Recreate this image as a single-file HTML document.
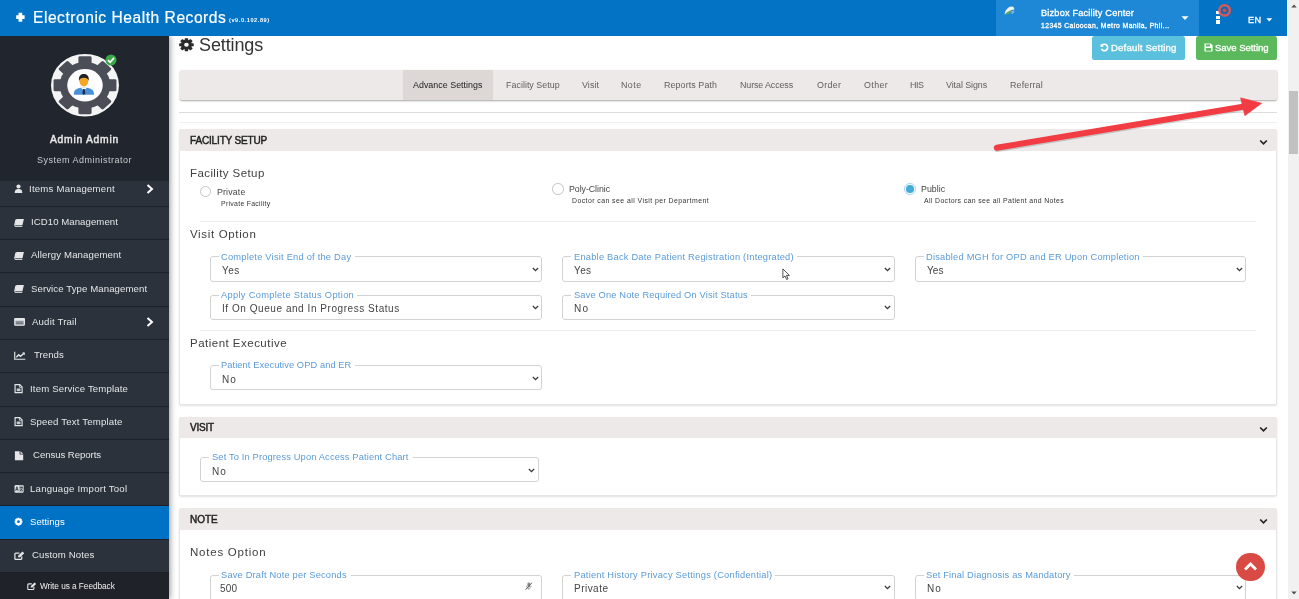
<!DOCTYPE html>
<html><head><meta charset="utf-8"><title>Electronic Health Records - Settings</title>
<style>
html,body{margin:0;padding:0;}
body{width:1299px;height:599px;position:relative;overflow:hidden;background:#fff;font-family:"Liberation Sans",sans-serif;}
.t{position:absolute;white-space:nowrap;display:block;will-change:transform;}
.abs,.ic,.mi,.fs,.gap,.hr,.card,.ch{position:absolute;}
.ic{overflow:visible;}
.mi{left:0;width:168.5px;height:32.3px;background:#2b323b;border-bottom:1px solid #1d2026;}
.mi.act{background:#0072c6;}
.fs{border:1px solid #d2d2d2;border-radius:3px;background:#fff;}
.gap{height:3px;background:#fff;}
.hr{height:1px;background:#ececec;}
.card{background:#fff;border:1px solid #e6e6e6;border-radius:2px;box-shadow:0 1px 2px rgba(0,0,0,.12);}
.ch{background:#ece9e8;border-radius:2px 2px 0 0;}
</style></head><body>

<!-- main content background -->
<div class="abs" style="left:168px;top:36px;width:1120px;height:563px;background:#fff"></div>

<!-- page title -->
<svg class="ic" style="left:179.1px;top:38.4px" width="14.9" height="13.5" viewBox="0 0 20 20" preserveAspectRatio="none"><g fill="#2b2b2b"><circle cx="10" cy="10" r="7.3"/><g transform="rotate(0 10 10)"><rect x="7.7" y="0.2" width="4.6" height="5" rx="0.8"/><rect x="7.7" y="14.8" width="4.6" height="5" rx="0.8"/></g><g transform="rotate(45 10 10)"><rect x="7.7" y="0.2" width="4.6" height="5" rx="0.8"/><rect x="7.7" y="14.8" width="4.6" height="5" rx="0.8"/></g><g transform="rotate(90 10 10)"><rect x="7.7" y="0.2" width="4.6" height="5" rx="0.8"/><rect x="7.7" y="14.8" width="4.6" height="5" rx="0.8"/></g><g transform="rotate(135 10 10)"><rect x="7.7" y="0.2" width="4.6" height="5" rx="0.8"/><rect x="7.7" y="14.8" width="4.6" height="5" rx="0.8"/></g></g><circle cx="10" cy="10" r="3.1" fill="#fff"/></svg>
<span class="t" style="left:199.30px;top:33.00px;font-size:18.00px;line-height:24.00px;color:#333;font-weight:400;letter-spacing:-0.120px;">Settings</span>

<!-- buttons -->
<div class="abs" style="left:1092px;top:36px;width:93px;height:23.6px;background:#5bc0de;border-radius:2.5px"></div>
<svg class="ic" style="left:1099.5px;top:43px" width="9" height="9" viewBox="0 0 10 10"><path d="M2.2 2.6 A3.6 3.6 0 1 1 1.6 6.4" fill="none" stroke="#fff" stroke-width="1.9"/><path d="M0.6 0.8 V4.4 H4.2 Z" fill="#fff"/></svg>
<span class="t" style="left:1111.20px;top:40.00px;font-size:9.60px;line-height:15.00px;color:#fff;font-weight:400;letter-spacing:0.179px;-webkit-text-stroke:0.3px currentColor;">Default Setting</span>
<div class="abs" style="left:1195.6px;top:36px;width:81.4px;height:23.6px;background:#5cb85c;border-radius:2.5px"></div>
<svg class="ic" style="left:1203.5px;top:43.2px" width="9" height="9" viewBox="0 0 10 10"><path d="M0.5 0.5 H7.6 L9.5 2.4 V9.5 H0.5 Z" fill="#fff"/><rect x="2" y="1.5" width="4.6" height="2.3" fill="#5cb85c"/><rect x="2" y="5.6" width="6" height="3" fill="#5cb85c"/></svg>
<span class="t" style="left:1214.80px;top:40.00px;font-size:9.60px;line-height:15.00px;color:#fff;font-weight:400;letter-spacing:-0.070px;-webkit-text-stroke:0.3px currentColor;">Save Setting</span>

<!-- tab bar -->
<div class="abs" style="left:179.5px;top:69.6px;width:1097.5px;height:30.2px;background:#ece9e8;border-radius:2px;box-shadow:0 1px 2px rgba(0,0,0,.35)"></div>
<div class="abs" style="left:403px;top:69.6px;width:90px;height:30.2px;background:#ddd7d6"></div>
<span class="t" style="left:413.30px;top:78.00px;font-size:8.90px;line-height:14.00px;color:#222;font-weight:400;letter-spacing:0.024px;">Advance Settings</span><span class="t" style="left:505.80px;top:78.00px;font-size:8.90px;line-height:14.00px;color:#606060;font-weight:400;letter-spacing:0.028px;">Facility Setup</span><span class="t" style="left:582.00px;top:78.00px;font-size:8.90px;line-height:14.00px;color:#606060;font-weight:400;letter-spacing:0.090px;">Visit</span><span class="t" style="left:621.30px;top:78.00px;font-size:8.90px;line-height:14.00px;color:#606060;font-weight:400;letter-spacing:0.463px;">Note</span><span class="t" style="left:664.30px;top:78.00px;font-size:8.90px;line-height:14.00px;color:#606060;font-weight:400;letter-spacing:0.103px;">Reports Path</span><span class="t" style="left:740.00px;top:78.00px;font-size:8.90px;line-height:14.00px;color:#606060;font-weight:400;letter-spacing:-0.101px;">Nurse Access</span><span class="t" style="left:816.70px;top:78.00px;font-size:8.90px;line-height:14.00px;color:#606060;font-weight:400;letter-spacing:0.342px;">Order</span><span class="t" style="left:863.50px;top:78.00px;font-size:8.90px;line-height:14.00px;color:#606060;font-weight:400;letter-spacing:0.390px;">Other</span><span class="t" style="left:910.00px;top:78.00px;font-size:8.90px;line-height:14.00px;color:#606060;font-weight:400;letter-spacing:-0.438px;">HIS</span><span class="t" style="left:946.30px;top:78.00px;font-size:8.90px;line-height:14.00px;color:#606060;font-weight:400;letter-spacing:-0.063px;">Vital Signs</span><span class="t" style="left:1010.30px;top:78.00px;font-size:8.90px;line-height:14.00px;color:#606060;font-weight:400;letter-spacing:0.158px;">Referral</span>
<div class="hr" style="left:179px;top:111.5px;width:1098px;background:#dcdcdc"></div>
<div class="hr" style="left:179px;top:122px;width:1098px;background:#f0f0f0"></div>

<!-- FACILITY SETUP card -->
<div class="card" style="left:179px;top:129px;width:1096px;height:273.5px"></div>
<div class="ch" style="left:179px;top:129px;width:1098px;height:22.3px"></div>
<span class="t" style="left:190.20px;top:133.00px;font-size:10.00px;line-height:15.00px;color:#222;font-weight:400;letter-spacing:-0.153px;-webkit-text-stroke:0.45px currentColor;">FACILITY SETUP</span>
<svg class="ic" style="left:1259px;top:139px" width="9" height="7" viewBox="0 0 9 7"><path d="M1.2 1.5 L4.5 4.8 L7.8 1.5" fill="none" stroke="#222" stroke-width="1.7"/></svg>
<span class="t" style="left:190.30px;top:165.00px;font-size:11.50px;line-height:16.00px;color:#3f3f3f;font-weight:400;letter-spacing:0.405px;">Facility Setup</span>
<div class="abs" style="left:199.7px;top:185.6px;width:9.6px;height:9.6px;border:1px solid #c4c4c4;border-radius:50%;background:#fff"></div>
<span class="t" style="left:217.10px;top:185.00px;font-size:8.80px;line-height:14.00px;color:#444;font-weight:400;letter-spacing:0.152px;">Private</span><span class="t" style="left:220.60px;top:198.00px;font-size:6.90px;line-height:11.00px;color:#333;font-weight:400;letter-spacing:0.296px;">Private Facility</span>
<div class="abs" style="left:552.1px;top:183.1px;width:9.6px;height:9.6px;border:1px solid #c4c4c4;border-radius:50%;background:#fff"></div>
<span class="t" style="left:569.30px;top:182.00px;font-size:8.80px;line-height:14.00px;color:#444;font-weight:400;letter-spacing:-0.045px;">Poly-Clinic</span><span class="t" style="left:572.30px;top:195.00px;font-size:6.90px;line-height:11.00px;color:#333;font-weight:400;letter-spacing:0.444px;">Doctor can see all Visit per Department</span>
<div class="abs" style="left:904.1px;top:182.9px;width:9.8px;height:9.8px;border:1px solid #a6d6ee;border-radius:50%;background:#fff"></div>
<div class="abs" style="left:906.2px;top:185px;width:7.6px;height:7.6px;border-radius:50%;background:#45acda"></div>
<span class="t" style="left:921.30px;top:182.00px;font-size:8.80px;line-height:14.00px;color:#444;font-weight:400;letter-spacing:0.028px;">Public</span><span class="t" style="left:924.30px;top:195.00px;font-size:6.90px;line-height:11.00px;color:#333;font-weight:400;letter-spacing:0.370px;">All Doctors can see all Patient and Notes</span>
<div class="hr" style="left:200px;top:221px;width:1056px"></div>
<span class="t" style="left:190.30px;top:226.00px;font-size:11.50px;line-height:16.00px;color:#3f3f3f;font-weight:400;letter-spacing:0.655px;">Visit Option</span><div class="fs" style="left:209.90px;top:256.35px;width:330.30px;height:23.65px"></div><div class="gap" style="left:218.90px;top:255.35px;width:136.40px"></div><span class="t" style="left:221.40px;top:250.00px;font-size:9.30px;line-height:14.00px;color:#5b9bd8;font-weight:400;letter-spacing:0.221px;">Complete Visit End of the Day</span><span class="t" style="left:222.00px;top:263.00px;font-size:10.00px;line-height:15.00px;color:#444;font-weight:400;letter-spacing:0.443px;">Yes</span><svg class="ic" style="left:531.80px;top:266.85px" width="7" height="5.25" viewBox="0 0 8 6"><path d="M1 1.2 L4 4.2 L7 1.2" fill="none" stroke="#3a3a3a" stroke-width="1.5"/></svg><div class="fs" style="left:562.00px;top:256.35px;width:330.60px;height:23.65px"></div><div class="gap" style="left:571.00px;top:255.35px;width:225.50px"></div><span class="t" style="left:573.50px;top:250.00px;font-size:9.30px;line-height:14.00px;color:#5b9bd8;font-weight:400;letter-spacing:0.221px;">Enable Back Date Patient Registration (Integrated)</span><span class="t" style="left:574.10px;top:263.00px;font-size:10.00px;line-height:15.00px;color:#444;font-weight:400;letter-spacing:0.393px;">Yes</span><svg class="ic" style="left:884.20px;top:266.85px" width="7" height="5.25" viewBox="0 0 8 6"><path d="M1 1.2 L4 4.2 L7 1.2" fill="none" stroke="#3a3a3a" stroke-width="1.5"/></svg><div class="fs" style="left:914.70px;top:256.35px;width:329.60px;height:23.65px"></div><div class="gap" style="left:923.70px;top:255.35px;width:219.30px"></div><span class="t" style="left:926.20px;top:250.00px;font-size:9.30px;line-height:14.00px;color:#5b9bd8;font-weight:400;letter-spacing:0.211px;">Disabled MGH for OPD and ER Upon Completion</span><span class="t" style="left:926.80px;top:263.00px;font-size:10.00px;line-height:15.00px;color:#444;font-weight:400;letter-spacing:0.043px;">Yes</span><svg class="ic" style="left:1235.90px;top:266.85px" width="7" height="5.25" viewBox="0 0 8 6"><path d="M1 1.2 L4 4.2 L7 1.2" fill="none" stroke="#3a3a3a" stroke-width="1.5"/></svg><div class="fs" style="left:209.90px;top:294.80px;width:330.30px;height:23.10px"></div><div class="gap" style="left:218.90px;top:293.80px;width:138.60px"></div><span class="t" style="left:221.40px;top:288.00px;font-size:9.30px;line-height:14.00px;color:#5b9bd8;font-weight:400;letter-spacing:0.305px;">Apply Complete Status Option</span><span class="t" style="left:222.00px;top:301.00px;font-size:10.00px;line-height:15.00px;color:#444;font-weight:400;letter-spacing:0.552px;">If On Queue and In Progress Status</span><svg class="ic" style="left:531.80px;top:305.30px" width="7" height="5.25" viewBox="0 0 8 6"><path d="M1 1.2 L4 4.2 L7 1.2" fill="none" stroke="#3a3a3a" stroke-width="1.5"/></svg><div class="fs" style="left:562.00px;top:294.80px;width:330.60px;height:23.10px"></div><div class="gap" style="left:571.00px;top:293.80px;width:180.00px"></div><span class="t" style="left:573.50px;top:288.00px;font-size:9.30px;line-height:14.00px;color:#5b9bd8;font-weight:400;letter-spacing:0.159px;">Save One Note Required On Visit Status</span><span class="t" style="left:574.10px;top:301.00px;font-size:10.00px;line-height:15.00px;color:#444;font-weight:400;letter-spacing:1.278px;">No</span><svg class="ic" style="left:884.20px;top:305.30px" width="7" height="5.25" viewBox="0 0 8 6"><path d="M1 1.2 L4 4.2 L7 1.2" fill="none" stroke="#3a3a3a" stroke-width="1.5"/></svg>
<div class="hr" style="left:200px;top:330px;width:1056px"></div>
<span class="t" style="left:190.30px;top:335.00px;font-size:11.50px;line-height:16.00px;color:#3f3f3f;font-weight:400;letter-spacing:0.484px;">Patient Executive</span><div class="fs" style="left:209.90px;top:365.30px;width:330.30px;height:23.10px"></div><div class="gap" style="left:218.90px;top:364.30px;width:136.60px"></div><span class="t" style="left:221.40px;top:358.00px;font-size:9.30px;line-height:14.00px;color:#5b9bd8;font-weight:400;letter-spacing:0.080px;">Patient Executive OPD and ER</span><span class="t" style="left:222.00px;top:372.00px;font-size:10.00px;line-height:15.00px;color:#444;font-weight:400;letter-spacing:1.078px;">No</span><svg class="ic" style="left:531.80px;top:375.80px" width="7" height="5.25" viewBox="0 0 8 6"><path d="M1 1.2 L4 4.2 L7 1.2" fill="none" stroke="#3a3a3a" stroke-width="1.5"/></svg>

<!-- VISIT card -->
<div class="card" style="left:179px;top:416.5px;width:1096px;height:77px"></div>
<div class="ch" style="left:179px;top:416.5px;width:1098px;height:21px"></div>
<span class="t" style="left:190.20px;top:420.00px;font-size:10.00px;line-height:15.00px;color:#222;font-weight:400;letter-spacing:-0.199px;-webkit-text-stroke:0.45px currentColor;">VISIT</span>
<svg class="ic" style="left:1259px;top:425.5px" width="9" height="7" viewBox="0 0 9 7"><path d="M1.2 1.5 L4.5 4.8 L7.8 1.5" fill="none" stroke="#222" stroke-width="1.7"/></svg>
<div class="fs" style="left:200.00px;top:457.10px;width:336.80px;height:22.90px"></div><div class="gap" style="left:209.00px;top:456.10px;width:203.50px"></div><span class="t" style="left:211.50px;top:450.00px;font-size:9.30px;line-height:14.00px;color:#5b9bd8;font-weight:400;letter-spacing:0.149px;">Set To In Progress Upon Access Patient Chart</span><span class="t" style="left:212.10px;top:464.00px;font-size:10.00px;line-height:15.00px;color:#444;font-weight:400;letter-spacing:1.078px;">No</span><svg class="ic" style="left:528.40px;top:467.60px" width="7" height="5.25" viewBox="0 0 8 6"><path d="M1 1.2 L4 4.2 L7 1.2" fill="none" stroke="#3a3a3a" stroke-width="1.5"/></svg>

<!-- NOTE card -->
<div class="card" style="left:179px;top:508.5px;width:1096px;height:120px"></div>
<div class="ch" style="left:179px;top:508.2px;width:1098px;height:22px"></div>
<span class="t" style="left:190.20px;top:512.00px;font-size:10.00px;line-height:15.00px;color:#222;font-weight:400;letter-spacing:-0.003px;-webkit-text-stroke:0.45px currentColor;">NOTE</span>
<svg class="ic" style="left:1259px;top:517.5px" width="9" height="7" viewBox="0 0 9 7"><path d="M1.2 1.5 L4.5 4.8 L7.8 1.5" fill="none" stroke="#222" stroke-width="1.7"/></svg>
<span class="t" style="left:190.30px;top:544.00px;font-size:11.50px;line-height:16.00px;color:#3f3f3f;font-weight:400;letter-spacing:0.771px;">Notes Option</span><div class="fs" style="left:209.90px;top:574.80px;width:330.30px;height:24.70px"></div><div class="gap" style="left:218.90px;top:573.80px;width:131.90px"></div><span class="t" style="left:221.40px;top:568.00px;font-size:9.30px;line-height:14.00px;color:#5b9bd8;font-weight:400;letter-spacing:0.178px;">Save Draft Note per Seconds</span><span class="t" style="left:220.10px;top:581.00px;font-size:10.00px;line-height:15.00px;color:#444;font-weight:400;letter-spacing:0.238px;">500</span><div class="fs" style="left:562.00px;top:574.80px;width:330.60px;height:24.70px"></div><div class="gap" style="left:571.00px;top:573.80px;width:204.00px"></div><span class="t" style="left:573.50px;top:568.00px;font-size:9.30px;line-height:14.00px;color:#5b9bd8;font-weight:400;letter-spacing:0.229px;">Patient History Privacy Settings (Confidential)</span><span class="t" style="left:574.10px;top:581.00px;font-size:10.00px;line-height:15.00px;color:#444;font-weight:400;letter-spacing:0.473px;">Private</span><svg class="ic" style="left:884.20px;top:585.30px" width="7" height="5.25" viewBox="0 0 8 6"><path d="M1 1.2 L4 4.2 L7 1.2" fill="none" stroke="#3a3a3a" stroke-width="1.5"/></svg><div class="fs" style="left:914.70px;top:574.80px;width:329.60px;height:24.70px"></div><div class="gap" style="left:923.70px;top:573.80px;width:150.80px"></div><span class="t" style="left:926.20px;top:568.00px;font-size:9.30px;line-height:14.00px;color:#5b9bd8;font-weight:400;letter-spacing:0.176px;">Set Final Diagnosis as Mandatory</span><span class="t" style="left:926.80px;top:581.00px;font-size:10.00px;line-height:15.00px;color:#444;font-weight:400;letter-spacing:0.978px;">No</span><svg class="ic" style="left:1235.90px;top:585.30px" width="7" height="5.25" viewBox="0 0 8 6"><path d="M1 1.2 L4 4.2 L7 1.2" fill="none" stroke="#3a3a3a" stroke-width="1.5"/></svg>

<svg class="ic" style="left:524.8px;top:582.2px" width="7.4" height="8.4" viewBox="0 0 7.4 8.4"><rect x="2.4" y="0.6" width="2.8" height="4.6" rx="1.4" fill="#8a8a8a"/><path d="M1.4 3.8 C1.4 7 6.2 7 6.2 3.8 M3.8 6.2 V7.8" fill="none" stroke="#8a8a8a" stroke-width="0.8"/><path d="M0.6 7.8 L6.8 0.8" stroke="#555" stroke-width="1"/></svg>
<!-- red arrow annotation -->
<svg class="ic" style="left:0;top:0" width="1299" height="599" viewBox="0 0 1299 599">
<g opacity="0.25" transform="translate(0.8,1.2)"><path d="M996.8 147.7 L1243 106.7" stroke="#555" stroke-width="6.4" stroke-linecap="round"/></g>
<path d="M996.8 147.7 L1243 106.7" stroke="#f03c42" stroke-width="6" stroke-linecap="round" fill="none"/>
<path d="M1240.7 97.9 L1261.6 103.3 L1244.9 115.6 Z" fill="#f03c42" stroke="#f03c42" stroke-width="0.8" stroke-linejoin="round"/>
</svg>

<!-- scroll-to-top button -->
<div class="abs" style="left:1236px;top:552.5px;width:28.5px;height:28.5px;border-radius:50%;background:#d94a45"></div>
<svg class="ic" style="left:1243px;top:561px" width="15" height="11" viewBox="0 0 15 11"><path d="M2 8.5 L7.5 3 L13 8.5" fill="none" stroke="#fff" stroke-width="2.8"/></svg>

<!-- mouse cursor -->
<svg class="ic" style="left:782.2px;top:267.6px" width="8.6" height="12.9" viewBox="0 0 10 15"><path d="M1 1 V11.5 L3.5 9.2 L5.3 13.3 L7 12.6 L5.2 8.6 H8.6 Z" fill="#fff" stroke="#222" stroke-width="0.9"/></svg>

<!-- sidebar -->
<div class="abs" style="left:0;top:36px;width:168.5px;height:563px;background:#21252d;box-shadow:1px 0 6px rgba(0,0,0,.42)"></div>
<div class="mi" style="top:173.45px"></div><svg class="ic" style="left:14px;top:184.25px" width="9" height="9" viewBox="0 0 10 10"><circle cx="5" cy="2.8" r="2.3" fill="#e4e6e8"/><path d="M0.8 10 C0.8 6.5 2.5 5.6 5 5.6 S9.2 6.5 9.2 10Z" fill="#e4e6e8"/></svg><span class="t" style="left:29.30px;top:181.00px;font-size:9.60px;line-height:15.00px;color:#e4e6e8;font-weight:400;letter-spacing:0.236px;">Items Management</span><svg class="ic" style="left:146px;top:183.75px" width="8" height="10" viewBox="0 0 8 10"><path d="M1.5 1 L6 5 L1.5 9" fill="none" stroke="#fff" stroke-width="2"/></svg><div class="mi" style="top:206.75px"></div><svg class="ic" style="left:14px;top:217.55px" width="9" height="9" viewBox="0 0 10 10"><path d="M2.6 1.2 H11 L9.4 8 H1 Z" fill="#e4e6e8"/><path d="M0.7 8.4 L2.2 1.8" stroke="#e4e6e8" stroke-width="1.3"/><path d="M0.8 9.3 H9.2" stroke="#e4e6e8" stroke-width="1.1"/></svg><span class="t" style="left:31.00px;top:214.00px;font-size:9.60px;line-height:15.00px;color:#e4e6e8;font-weight:400;letter-spacing:0.067px;">ICD10 Management</span><div class="mi" style="top:240.05px"></div><svg class="ic" style="left:14px;top:250.85px" width="9" height="9" viewBox="0 0 10 10"><path d="M2.6 1.2 H11 L9.4 8 H1 Z" fill="#e4e6e8"/><path d="M0.7 8.4 L2.2 1.8" stroke="#e4e6e8" stroke-width="1.3"/><path d="M0.8 9.3 H9.2" stroke="#e4e6e8" stroke-width="1.1"/></svg><span class="t" style="left:31.00px;top:247.00px;font-size:9.60px;line-height:15.00px;color:#e4e6e8;font-weight:400;letter-spacing:0.128px;">Allergy Management</span><div class="mi" style="top:273.35px"></div><svg class="ic" style="left:14px;top:284.15px" width="9" height="9" viewBox="0 0 10 10"><path d="M2.6 1.2 H11 L9.4 8 H1 Z" fill="#e4e6e8"/><path d="M0.7 8.4 L2.2 1.8" stroke="#e4e6e8" stroke-width="1.3"/><path d="M0.8 9.3 H9.2" stroke="#e4e6e8" stroke-width="1.1"/></svg><span class="t" style="left:30.60px;top:281.00px;font-size:9.60px;line-height:15.00px;color:#e4e6e8;font-weight:400;letter-spacing:0.098px;">Service Type Management</span><div class="mi" style="top:306.65px"></div><svg class="ic" style="left:14px;top:317.45px" width="9" height="9" viewBox="0 0 10 10"><rect x="0.8" y="1.6" width="10.8" height="7.6" rx="0.8" fill="#aeb3ba" stroke="#e4e6e8" stroke-width="1.2"/><rect x="0.8" y="1.6" width="10.8" height="2.4" fill="#e4e6e8"/><path d="M2.2 5.6 H10.2 M2.2 7.4 H10.2" stroke="#4a5059" stroke-width="0.8"/></svg><span class="t" style="left:32.00px;top:314.00px;font-size:9.60px;line-height:15.00px;color:#e4e6e8;font-weight:400;letter-spacing:0.190px;">Audit Trail</span><svg class="ic" style="left:146px;top:316.95px" width="8" height="10" viewBox="0 0 8 10"><path d="M1.5 1 L6 5 L1.5 9" fill="none" stroke="#fff" stroke-width="2"/></svg><div class="mi" style="top:339.95px"></div><svg class="ic" style="left:14px;top:350.75px" width="9" height="9" viewBox="0 0 10 10"><path d="M0.8 0.8 V9.2 H12.6" fill="none" stroke="#e4e6e8" stroke-width="1.3"/><path d="M2.6 7 L5.2 4.2 L7.2 6 L11.4 2.2" fill="none" stroke="#e4e6e8" stroke-width="1.6"/><path d="M9 1.6 H12 V4.6 Z" fill="#e4e6e8"/></svg><span class="t" style="left:33.50px;top:347.00px;font-size:9.60px;line-height:15.00px;color:#e4e6e8;font-weight:400;letter-spacing:0.059px;">Trends</span><div class="mi" style="top:373.25px"></div><svg class="ic" style="left:14px;top:384.05px" width="9" height="9" viewBox="0 0 10 10"><path d="M1.2 0.6 H6.4 L9 3.2 V9.6 H1.2 Z" fill="none" stroke="#e4e6e8" stroke-width="1.3"/><path d="M6 0.8 V3.6 H8.8" fill="none" stroke="#e4e6e8" stroke-width="0.9"/><rect x="3" y="5" width="4.2" height="3" fill="#c9ccd0"/></svg><span class="t" style="left:30.40px;top:381.00px;font-size:9.60px;line-height:15.00px;color:#e4e6e8;font-weight:400;letter-spacing:0.161px;">Item Service Template</span><div class="mi" style="top:406.55px"></div><svg class="ic" style="left:14px;top:417.35px" width="9" height="9" viewBox="0 0 10 10"><path d="M1.2 0.6 H6.4 L9 3.2 V9.6 H1.2 Z" fill="none" stroke="#e4e6e8" stroke-width="1.3"/><path d="M6 0.8 V3.6 H8.8" fill="none" stroke="#e4e6e8" stroke-width="0.9"/><rect x="3" y="5" width="4.2" height="3" fill="#c9ccd0"/></svg><span class="t" style="left:30.40px;top:414.00px;font-size:9.60px;line-height:15.00px;color:#e4e6e8;font-weight:400;letter-spacing:0.175px;">Speed Text Template</span><div class="mi" style="top:439.85px"></div><svg class="ic" style="left:14px;top:450.65px" width="9" height="9" viewBox="0 0 10 10"><path d="M1 0.2 H6.2 V4 H10.2 V10.2 H1 Z M7.2 0.2 L10.2 3 H7.2Z" fill="#e4e6e8"/></svg><span class="t" style="left:33.00px;top:447.00px;font-size:9.60px;line-height:15.00px;color:#e4e6e8;font-weight:400;letter-spacing:-0.053px;">Census Reports</span><div class="mi" style="top:473.15px"></div><svg class="ic" style="left:14px;top:483.95px" width="9" height="9" viewBox="0 0 10 10"><rect x="0.6" y="1" width="10" height="8.6" rx="1.4" fill="#dfe1e4"/><rect x="5.4" y="1" width="5.2" height="8.6" rx="1.2" fill="#b9bdc3"/><path d="M1.8 7.6 L3.2 3 L4.6 7.6 M2.3 6.2 H4.1" stroke="#2b323b" stroke-width="0.9" fill="none"/><path d="M6.2 3.8 H9.8 M8 2.8 V3.8 M6.8 7.6 C8.4 6.8 9 5.4 9.2 3.8 M7 5 C7.6 6.4 8.6 7.2 9.8 7.6" stroke="#2b323b" stroke-width="0.8" fill="none"/></svg><span class="t" style="left:30.40px;top:481.00px;font-size:9.60px;line-height:15.00px;color:#e4e6e8;font-weight:400;letter-spacing:0.233px;">Language Import Tool</span><div class="mi act" style="top:506.45px"></div><svg class="ic" style="left:14px;top:517.25px" width="9" height="9" viewBox="0 0 10 10"><circle cx="5" cy="5.2" r="2.7" fill="none" stroke="#fff" stroke-width="2.3"/><g stroke="#fff" stroke-width="1.9"><path d="M5 0.8V2.4 M5 8V9.6 M0.6 5.2H2.2 M7.8 5.2H9.4 M1.9 2.1L3 3.2 M7 7.2L8.1 8.3 M1.9 8.3L3 7.2 M7 3.2L8.1 2.1"/></g></svg><span class="t" style="left:30.40px;top:514.00px;font-size:9.60px;line-height:15.00px;color:#fff;font-weight:400;letter-spacing:0.005px;">Settings</span><div class="mi" style="top:539.75px"></div><svg class="ic" style="left:14px;top:550.55px" width="9" height="9" viewBox="0 0 10 10"><path d="M8.6 6 V8.4 Q8.6 9.4 7.6 9.4 H2 Q1 9.4 1 8.4 V3.4 Q1 2.4 2 2.4 H6" fill="none" stroke="#e4e6e8" stroke-width="1.4"/><path d="M4.4 7 L4.9 5 L9.4 0.6 L11.4 2.6 L6.9 7 Z" fill="#e4e6e8"/></svg><span class="t" style="left:31.50px;top:547.00px;font-size:9.60px;line-height:15.00px;color:#e4e6e8;font-weight:400;letter-spacing:0.138px;">Custom Notes</span>
<!-- profile block (covers clipped first item) -->
<div class="abs" style="left:0;top:36px;width:168.5px;height:145px;background:#21252d"></div>
<svg class="ic" style="left:49.5px;top:53.4px" width="71" height="65.4" viewBox="0 0 70 70" preserveAspectRatio="none">
<circle cx="34.5" cy="34.5" r="33.5" fill="#f4f4f5"/>
<g fill="#4b4e57"><circle cx="34.5" cy="34.5" r="25"/><g transform="rotate(0 34.5 34.5)"><rect x="28" y="3.5" width="13" height="12" rx="1.5"/><rect x="28" y="53.5" width="13" height="12" rx="1.5"/></g><g transform="rotate(45 34.5 34.5)"><rect x="28" y="3.5" width="13" height="12" rx="1.5"/><rect x="28" y="53.5" width="13" height="12" rx="1.5"/></g><g transform="rotate(90 34.5 34.5)"><rect x="28" y="3.5" width="13" height="12" rx="1.5"/><rect x="28" y="53.5" width="13" height="12" rx="1.5"/></g><g transform="rotate(135 34.5 34.5)"><rect x="28" y="3.5" width="13" height="12" rx="1.5"/><rect x="28" y="53.5" width="13" height="12" rx="1.5"/></g></g>
<circle cx="34.5" cy="34.5" r="17.5" fill="#fdfdfd"/>
<g transform="translate(-1.1,-0.9)"><path d="M24.5 45.5 C24.5 39.5 28 38 34.5 38 S44.5 39.5 44.5 45.5 Z" fill="#4a90d9"/>
<path d="M31.5 38 L34.5 41 L37.5 38 Z" fill="#fff"/><path d="M33.7 39.5 H35.3 L36 44.5 L34.5 45.5 L33 44.5 Z" fill="#1d2b4a"/>
<ellipse cx="34.5" cy="31.5" rx="4.3" ry="5.2" fill="#f5a623"/>
<path d="M29.8 31 C29 25 32 23.5 34.5 23.5 S40 25 39.2 31 C38.5 28.5 37 27.5 34.5 27.5 S30.5 28.5 29.8 31Z" fill="#222"/></g>
</svg>
<svg class="ic" style="left:104.6px;top:53.6px" width="12" height="12" viewBox="0 0 13 13"><circle cx="6.5" cy="6.5" r="6" fill="#3aa648"/><path d="M3.2 6.6 L5.6 9 L9.8 4.2" fill="none" stroke="#fff" stroke-width="1.9"/></svg>
<span class="t" style="left:49.80px;top:132.00px;font-size:10.30px;line-height:15.00px;color:#e8e8e8;font-weight:400;letter-spacing:0.749px;-webkit-text-stroke:0.45px currentColor;">Admin Admin</span><span class="t" style="left:36.60px;top:153.00px;font-size:9.00px;line-height:14.00px;color:#c9cbce;font-weight:400;letter-spacing:0.493px;">System Administrator</span>
<!-- feedback footer -->
<div class="abs" style="left:0;top:572.5px;width:168.5px;height:27px;background:#1f2228"></div>
<svg class="ic" style="left:27px;top:581.5px" width="8" height="8" viewBox="0 0 10 10"><path d="M8.6 6 V8.4 Q8.6 9.4 7.6 9.4 H2 Q1 9.4 1 8.4 V3.4 Q1 2.4 2 2.4 H6" fill="none" stroke="#e4e6e8" stroke-width="1.4"/><path d="M4.4 7 L4.9 5 L9.4 0.6 L11.4 2.6 L6.9 7 Z" fill="#e4e6e8"/></svg>
<span class="t" style="left:40.30px;top:579.00px;font-size:8.30px;line-height:14.00px;color:#f0f0f0;font-weight:400;letter-spacing:-0.060px;">Write us a Feedback</span>

<!-- top header -->
<div class="abs" style="left:0;top:0;width:1287px;height:35.5px;background:#0373c6"></div>
<svg class="ic" style="left:16.1px;top:11.9px" width="8.8" height="10.4" viewBox="0 0 10 11"><path d="M2.9 0.4 H7.1 V3.4 H9.8 V7.6 H7.1 V10.6 H2.9 V7.6 H0.2 V3.4 H2.9 Z" fill="#fff"/></svg>
<span class="t" style="left:32.60px;top:7.00px;font-size:15.60px;line-height:21.00px;color:#fff;font-weight:400;letter-spacing:0.522px;-webkit-text-stroke:0.2px currentColor;">Electronic Health Records</span><span class="t" style="left:229.00px;top:15.00px;font-size:5.60px;line-height:10.00px;color:#fff;font-weight:700;letter-spacing:0.574px;">(v9.0.102.89)</span>
<div class="abs" style="left:996.1px;top:0;width:203.1px;height:35.5px;background:#1e88d6"></div>
<svg class="ic" style="left:1003.6px;top:5.6px" width="11.4" height="9.8" viewBox="0 0 11.4 9.8"><path d="M0.6 8.6 C1 4.5 3.6 0.9 7.6 0.5 C9.6 0.5 10.6 2 10.2 3.6 C8 3.4 3.6 5.6 0.6 8.6 Z" fill="#eef3ee"/><path d="M0.6 8.9 C2.6 6.6 5 5 7.6 4.6 C7.2 6.8 4.2 8.6 0.6 8.9 Z" fill="#63ad4f"/><path d="M7.4 5.2 C8.6 4.6 9.8 4.4 10.6 4.6 C10.4 6.6 9.2 7.8 7.6 8.2 Z" fill="#7fb6e8"/></svg>
<span class="t" style="left:1040.80px;top:6.00px;font-size:9.20px;line-height:14.00px;color:#fff;font-weight:400;letter-spacing:0.191px;-webkit-text-stroke:0.3px currentColor;">Bizbox Facility Center</span><span class="t" style="left:1040.80px;top:20.00px;font-size:6.80px;line-height:11.00px;color:#fff;font-weight:400;letter-spacing:0.410px;-webkit-text-stroke:0.3px currentColor;">12345 Caloocan, Metro Manila, Phil...</span>
<svg class="ic" style="left:1181.4px;top:16.2px" width="8" height="4.2" viewBox="0 0 9 5"><path d="M0.3 0.3 H8.7 L4.5 4.7 Z" fill="#fff"/></svg>
<div class="abs" style="left:1215.9px;top:11.2px;width:4.3px;height:3.2px;background:#fff"></div>
<div class="abs" style="left:1215.9px;top:15.7px;width:4.3px;height:3.2px;background:#fff"></div>
<div class="abs" style="left:1215.9px;top:20.3px;width:4.3px;height:3.4px;background:#fff"></div>
<svg class="ic" style="left:1217px;top:2.5px" width="15" height="15" viewBox="0 0 15 15"><circle cx="7.6" cy="7.35" r="5.2" fill="#1d63b0" fill-opacity="0.55" stroke="#e0594f" stroke-width="2.5" stroke-opacity="0.95"/><circle cx="7.6" cy="7.35" r="1.8" fill="#e2483f"/></svg>
<span class="t" style="left:1247.50px;top:13.00px;font-size:9.20px;line-height:14.00px;color:#fff;font-weight:400;letter-spacing:0.372px;-webkit-text-stroke:0.3px currentColor;">EN</span>
<svg class="ic" style="left:1265.6px;top:17.6px" width="6.6" height="3.6" viewBox="0 0 7 4"><path d="M0.2 0.2 H6.8 L3.5 3.8 Z" fill="#fff"/></svg>

<!-- browser scrollbar -->
<div class="abs" style="left:1287.8px;top:0;width:11.2px;height:599px;background:#f1f1f1"></div>
<div class="abs" style="left:1289.2px;top:91px;width:8.6px;height:62.5px;background:#c1c1c1"></div>
<svg class="ic" style="left:1290.5px;top:4px" width="6" height="4" viewBox="0 0 6 4"><path d="M0.3 3.6 L3 0.6 L5.7 3.6 Z" fill="#505050"/></svg>
<svg class="ic" style="left:1290.7px;top:591px" width="6" height="4" viewBox="0 0 6 4"><path d="M0.3 0.4 L3 3.4 L5.7 0.4 Z" fill="#505050"/></svg>
</body></html>
